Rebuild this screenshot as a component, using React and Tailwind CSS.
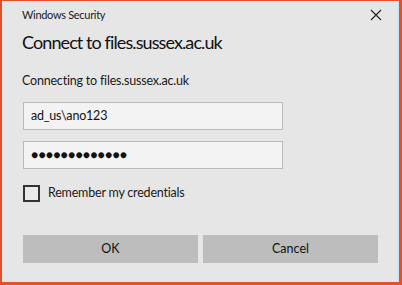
export default function App() {
  return (
    <div className="w-[402px] h-[285px] bg-[#e4502a] pl-[2px] pr-[3px] pt-[1px] pb-[3px] font-['Lato',sans-serif]">
      <div className="h-full bg-[#e6e6e6] border-r border-[#bfe3f5] flex flex-col pl-[20px] pr-[19px]">
        {/* Title bar */}
        <div className="flex items-center justify-between h-[27px] pt-[1px]">
          <span className="text-[11px] tracking-[-0.3px] text-[#1a1a1a]">Windows Security</span>
          <svg width="12" height="12" viewBox="0 0 12 12" className="mr-[-3px]">
            <path d="M1 1 L11 11 M11 1 L1 11" stroke="#222" strokeWidth="1.1" />
          </svg>
        </div>

        <h1 className="text-[18px] tracking-[-0.9px] leading-[28px] text-[#111]">Connect to files.sussex.ac.uk</h1>

        <p className="text-[12.5px] tracking-[-0.2px] text-[#1a1a1a] mt-[16px] leading-[18px]">Connecting to files.sussex.ac.uk</p>

        <div className="mt-[12px] w-[260px] ml-[1px] flex flex-col gap-[11px]">
          <div className="h-[28px] bg-[#f3f3f3] border border-[#b9b9b9] flex items-center px-[7px] text-[12.5px] tracking-[-0.2px] text-[#111]">
            ad_us\ano123
          </div>
          <div className="h-[28px] bg-[#f3f3f3] border border-[#b9b9b9] flex items-center px-[7px] text-[12px] tracking-[0.2px] text-[#111]">
            ●●●●●●●●●●●●●
          </div>
        </div>

        <label className="mt-[15px] ml-[1px] h-[18px] flex items-center gap-[8px]">
          <span className="w-[17px] h-[17px] border-2 border-[#333] bg-[#eaeaea]" />
          <span className="text-[12.5px] tracking-[-0.2px] text-[#1a1a1a]">Remember my credentials</span>
        </label>

        <div className="mt-[33px] ml-[1px] flex gap-[5px]">
          <button className="w-[175px] h-[28px] bg-[#bdbdbd] text-[12.5px] text-[#111]">OK</button>
          <button className="w-[175px] h-[28px] bg-[#bdbdbd] text-[12.5px] text-[#111]">Cancel</button>
        </div>
      </div>
    </div>
  );
}
